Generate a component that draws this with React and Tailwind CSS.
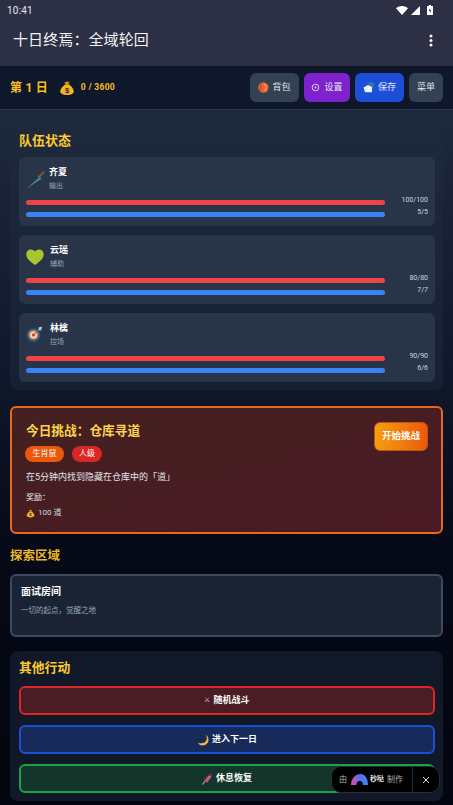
import React from "react";

const Bag = ({ s = 15 }) => (
  <svg width={s} height={s} viewBox="0 0 16 16" className="shrink-0">
    <path d="M6.5 4.5 5.2 1.8 7 2.4 8.3 1l1 1.400 1.600-.9-1.300 3z" fill="#d99a1c" />
    <path d="M6.3 4.500h3.600c2.400 1.500 4.800 4.300 4.800 6.800 0 2.700-2.600 3.700-6.700 3.700s-6.700-1-6.700-3.700c0-2.500 2.600-5.300 5-6.800z" fill="#f5b324" />
    <text x="8" y="12.500" textAnchor="middle" fontSize="7.500" fontWeight="700" fill="#1f2937" fontFamily="Liberation Sans">$</text>
  </svg>
);

const Dagger = () => (
  <svg width="20" height="20" viewBox="0 0 20 20" className="shrink-0">
    <path d="M1 19.500 13 8.500l1.600 1.600z" fill="#5b9a9c" />
    <path d="M1 19.500 13 8.500l.6.6z" fill="#3c6d72" />
    <path d="m11.400 7.200 3.600 3.600 1-.9-3.600-3.600z" fill="#3f8088" />
    <path d="m14.300 8.100 4.600-4.800-1.500-1.400-4.600 4.800z" fill="#8a5130" />
  </svg>
);

const Heart = () => (
  <svg width="18" height="16" viewBox="0 0 18 16" className="shrink-0">
    <path d="M9 16C5 13 .3 10 .3 5.200.3 2 2.600.4 4.800.4 6.600.4 8 1.200 9 2.400 10 1.200 11.400.4 13.200.4c2.200 0 4.500 1.600 4.500 4.800C17.700 10 13 13 9 16z" fill="#a9c52f" />
  </svg>
);

const Target = () => (
  <svg width="17" height="17" viewBox="0 0 17 17" className="shrink-0">
    <circle cx="7.500" cy="9" r="7" fill="#0f5f8f" />
    <circle cx="7.500" cy="9" r="5" fill="#ee7a35" />
    <circle cx="7.500" cy="9" r="3.200" fill="#f2e6d8" />
    <circle cx="7.500" cy="9" r="1.800" fill="#d9482b" />
    <path d="M7.500 9 14 2" stroke="#6b7280" strokeWidth="1.100" />
    <path d="m12.500 1.500 3.500-1-.8 3.800-2.200.2z" fill="#c3c9d1" />
  </svg>
);

const Pack = () => (
  <svg width="11" height="11" viewBox="0 0 11 11" className="shrink-0">
    <circle cx="5.500" cy="5.500" r="5.200" fill="#e5652b" />
    <path d="M6 2.500c1.500-.5 2 .5 1.800 3L7 9" stroke="#f7b58a" strokeWidth="1" fill="none" />
    <path d="M3 2.500 2.500 9" stroke="#b9481b" strokeWidth="1" />
  </svg>
);

const Gear = () => (
  <svg width="9" height="9" viewBox="0 0 9 9" className="shrink-0">
    <circle cx="4.500" cy="4.500" r="3.300" fill="none" stroke="#e2d5f5" strokeWidth="1" />
    <circle cx="4.500" cy="4.500" r="1" fill="#e2d5f5" />
  </svg>
);

const Disk = () => (
  <svg width="11" height="11" viewBox="0 0 11 11" className="shrink-0">
    <path d="M4 .5h6.500V7z" fill="#2e7f9f" />
    <path d="M.5 5.500 5 3l4 2v5.200H2z" fill="#eef3f8" />
  </svg>
);

const Moon = () => (
  <svg width="12" height="12" viewBox="0 0 12 12" className="shrink-0">
    <path d="M8.500.5c2.700 3.300 1.500 9.200-5 8.800-1 0-2.200-.3-3-.9 1.200 2 3 3 5 3 3.500 0 6-2.600 6-5.700C11.500 3.500 10.300 1.500 8.500.5z" fill="#f6b93b" />
  </svg>
);

const Syringe = () => (
  <svg width="11" height="12" viewBox="0 0 11 12" className="shrink-0">
    <path d="M.5 11.500 3 8" stroke="#a7a9c0" strokeWidth="1.200" />
    <path d="M2.500 7.500 7 2l2.500 1.800-4.500 6z" fill="#d65a92" />
    <path d="M2 5.500 5 8M4 3.500 7 6M8 .5l2.500 2.300" stroke="#a83a70" strokeWidth="1" />
  </svg>
);

const Member = ({ icon, name, role, hp, mp, gap }) => (
  <div className="rounded-md bg-[#283548] px-[7px] pt-[6px] h-[69px]">
    <div className="flex items-center h-[31px]">
      <div className="w-[22px] flex justify-start">{icon}</div>
      <div className={gap}>
        <div className="text-[9px] leading-[12px] font-bold text-white">{name}</div>
        <div className="text-[7px] leading-[10px] mt-[3px] text-[#94a3b8]">{role}</div>
      </div>
    </div>
    <div className="flex items-center h-[12px] mt-[1px]">
      <div className="w-[359px] h-[5px] rounded-full bg-[#ef4444] mt-[2px]" />
      <div className="flex-1 text-right text-[7px] leading-[10px] text-[#cbd5e1] -mt-[3px]">{hp}</div>
    </div>
    <div className="flex items-center h-[12px]">
      <div className="w-[359px] h-[5px] rounded-full bg-[#3b82f6] mt-[2px]" />
      <div className="flex-1 text-right text-[7px] leading-[10px] text-[#cbd5e1] -mt-[3px]">{mp}</div>
    </div>
  </div>
);

const Action = ({ cls, icon, label }) => (
  <div className={"h-[29px] rounded-md border-2 flex items-center justify-center gap-[3px] text-[9px] font-bold text-white " + cls}>
    {icon}
    <span>{label}</span>
  </div>
);

export default function App() {
  return (
    <div
      className="relative w-[453px] h-[805px] overflow-hidden flex flex-col bg-[#050914]"
      style={{ fontFamily: 'Roboto, "Noto Sans CJK SC", sans-serif' }}
    >
      <div className="h-[66px] shrink-0 bg-[#2d2f45] text-white">
        <div className="h-[20px] flex items-center justify-between pl-[7px] pr-[20px]">
          <span className="text-[10px] tracking-[0.2px] text-[#e8e8ee]">10:41</span>
          <div className="flex items-center gap-[4px]">
            <svg width="12" height="9" viewBox="0 0 12 9"><path d="M0 2.200C3.500-.7 8.500-.7 12 2.200L6 9z" fill="#fff" /></svg>
            <svg width="9" height="9" viewBox="0 0 9 9" className="-ml-[1px]"><path d="M0 9 9 0v9z" fill="#fff" /></svg>
            <svg width="6" height="10" viewBox="0 0 6 10" className="ml-[3px]"><path d="M2 0h2v1h2v9H0V1h2z" fill="#fff" /><path d="M3 3 1.800 6H3v2l1.200-3H3z" fill="#2d2f45" /></svg>
          </div>
        </div>
        <div className="h-[46px] flex items-center justify-between pl-[13px] pr-[20px] pb-[5px]">
          <span className="text-[15px] tracking-[0.1px] text-[#f4f4f6]">十日终焉：全域轮回</span>
          <svg width="4" height="13" viewBox="0 0 4 13"><circle cx="2" cy="2" r="1.500" fill="#fff" /><circle cx="2" cy="6.500" r="1.500" fill="#fff" /><circle cx="2" cy="11" r="1.500" fill="#fff" /></svg>
        </div>
      </div>

      <div className="h-[44px] shrink-0 bg-[#0f172a] border-b border-[#2a3648] flex items-center pl-[10px] pr-[10px]">
        <span className="text-[12px] font-bold text-[#fbbf24] tracking-[0.2px]">第 1 日</span>
        <div className="ml-[11px] flex items-center gap-[6px]">
          <Bag s={16} />
          <span className="text-[8.500px] font-bold text-[#fbbf24] tracking-[0.3px]">0 / 3600</span>
        </div>
        <div className="ml-auto flex gap-[5px] text-[9px] text-[#e5e7eb]">
          <div className="w-[49px] h-[29px] rounded-md bg-[#334155] flex items-center justify-center gap-[3px]"><Pack />背包</div>
          <div className="w-[46px] h-[29px] rounded-md bg-[#7e22ce] flex items-center justify-center gap-[4px]"><Gear />设置</div>
          <div className="w-[49px] h-[29px] rounded-md bg-[#1d4ed8] flex items-center justify-center gap-[4px]"><Disk />保存</div>
          <div className="w-[34px] h-[29px] rounded-md bg-[#334155] flex items-center justify-center">菜单</div>
        </div>
      </div>

      <div className="flex-1 min-h-0 px-[10px] pt-[8px] bg-[linear-gradient(180deg,#1e293b_0%,#0f172a_40%,#060a18_62%,#03060e_100%)]">
        <div className="rounded-lg bg-[#1e293b]/50 pl-[9px] pr-[8px] pt-[14px] h-[272px]">
          <h2 className="text-[13px] leading-[18px] font-bold text-[#fcc931]">队伍状态</h2>
          <div className="mt-[7px] flex flex-col gap-[9px]">
            <Member icon={<Dagger />} name="齐夏" role="输出" hp="100/100" mp="5/5" gap="ml-[1px]" />
            <Member icon={<Heart />} name="云瑶" role="辅助" hp="80/80" mp="7/7" gap="ml-[2px]" />
            <Member icon={<Target />} name="林檎" role="控场" hp="90/90" mp="6/6" gap="ml-[2px]" />
          </div>
        </div>

        <div className="mt-[16px] h-[128px] rounded-md border-2 border-[#e8691c] bg-gradient-to-br from-[#43201f] to-[#4b1a25] pl-[14px] pr-[13px] pt-[14px] flex justify-between">
          <div>
            <h2 className="text-[12.700px] leading-[18px] font-bold text-[#fcd34d]">今日挑战：仓库寻道</h2>
            <div className="mt-[6px] flex gap-[8px] text-[8px] leading-[16px] text-white -ml-[1px]">
              <span className="h-[16px] w-[39px] text-center rounded-full bg-[#ea580c]">生肖鼠</span>
              <span className="h-[16px] w-[30px] text-center rounded-full bg-[#dc2626]">人级</span>
            </div>
            <p className="mt-[8px] text-[9px] leading-[14px] text-[#e2e8f0]">在5分钟内找到隐藏在仓库中的「道」</p>
            <p className="mt-[8px] text-[8px] leading-[12px] text-[#e2e8f0]">奖励：</p>
            <div className="mt-[3px] flex items-center gap-[3px] text-[8px] leading-[12px] text-[#cbd5e1]"><Bag s={9} />100 道</div>
          </div>
          <div className="w-[54px] h-[29px] rounded-md border border-[#c2541a] bg-gradient-to-r from-[#f59e0b] to-[#ea580c] flex items-center justify-center text-[9.500px] font-bold text-white">开始挑战</div>
        </div>

        <h2 className="mt-[13px] text-[12.500px] leading-[18px] font-bold text-[#eab92b]">探索区域</h2>
        <div className="mt-[9px] h-[63px] rounded-md border-2 border-[#3b4a5e] bg-[#1a2333] pl-[9px] pt-[9px]">
          <div className="text-[10px] leading-[14px] font-bold text-white">面试房间</div>
          <div className="mt-[6px] text-[7.500px] leading-[12px] text-[#94a3b8]">一切的起点，觉醒之地</div>
        </div>

        <div className="mt-[14px] rounded-lg bg-[#111827] pl-[9px] pr-[8px] pt-[8px] h-[150px]">
          <h2 className="text-[12.800px] leading-[18px] font-bold text-[#fcc931]">其他行动</h2>
          <div className="mt-[9px] flex flex-col gap-[10px]">
            <Action cls="border-[#dc2626] bg-[#4a1c23]" icon={<span className="text-[7px] font-normal text-[#cbd5e1]">⚔</span>} label="随机战斗" />
            <Action cls="border-[#1d4ed8] bg-[#172a5a]" icon={<Moon />} label="进入下一日" />
            <Action cls="border-[#16a34a] bg-[#14352a]" icon={<Syringe />} label="休息恢复" />
          </div>
        </div>
      </div>

      <div className="absolute left-[331px] top-[766px] w-[109px] h-[27px] rounded-[10px] bg-black border border-[#2a2c30] flex items-center text-[8px] text-[#b5b5b5]">
        <div className="flex-1 flex items-center pl-[7px]">
          <span>由</span>
          <svg width="17" height="11" viewBox="0 0 17 11" className="ml-[4px]">
            <defs>
              <linearGradient id="lg" x1="0" y1="0" x2="1" y2="0">
                <stop offset="0" stopColor="#ec4899" />
                <stop offset="0.5" stopColor="#5b6cf5" />
                <stop offset="1" stopColor="#2f8bf5" />
              </linearGradient>
            </defs>
            <path d="M0 11C0 4.500 4.500 0 9.500 0 14 0 17 4.500 17 11h-5C12 8.500 10.800 7 8.800 7S5.500 8.500 5.500 11z" fill="url(#lg)" />
          </svg>
          <span className="ml-[2px] text-[#e2e2e2] font-bold text-[7px]">秒哒</span>
          <span className="ml-[3px]">制作</span>
        </div>
        <div className="w-[27px] h-full border-l border-[#2a2c30] flex items-center justify-center">
          <svg width="8" height="8" viewBox="0 0 8 8"><path d="m1 1 6 6M7 1 1 7" stroke="#e5e5e5" strokeWidth="1" /></svg>
        </div>
      </div>
    </div>
  );
}
